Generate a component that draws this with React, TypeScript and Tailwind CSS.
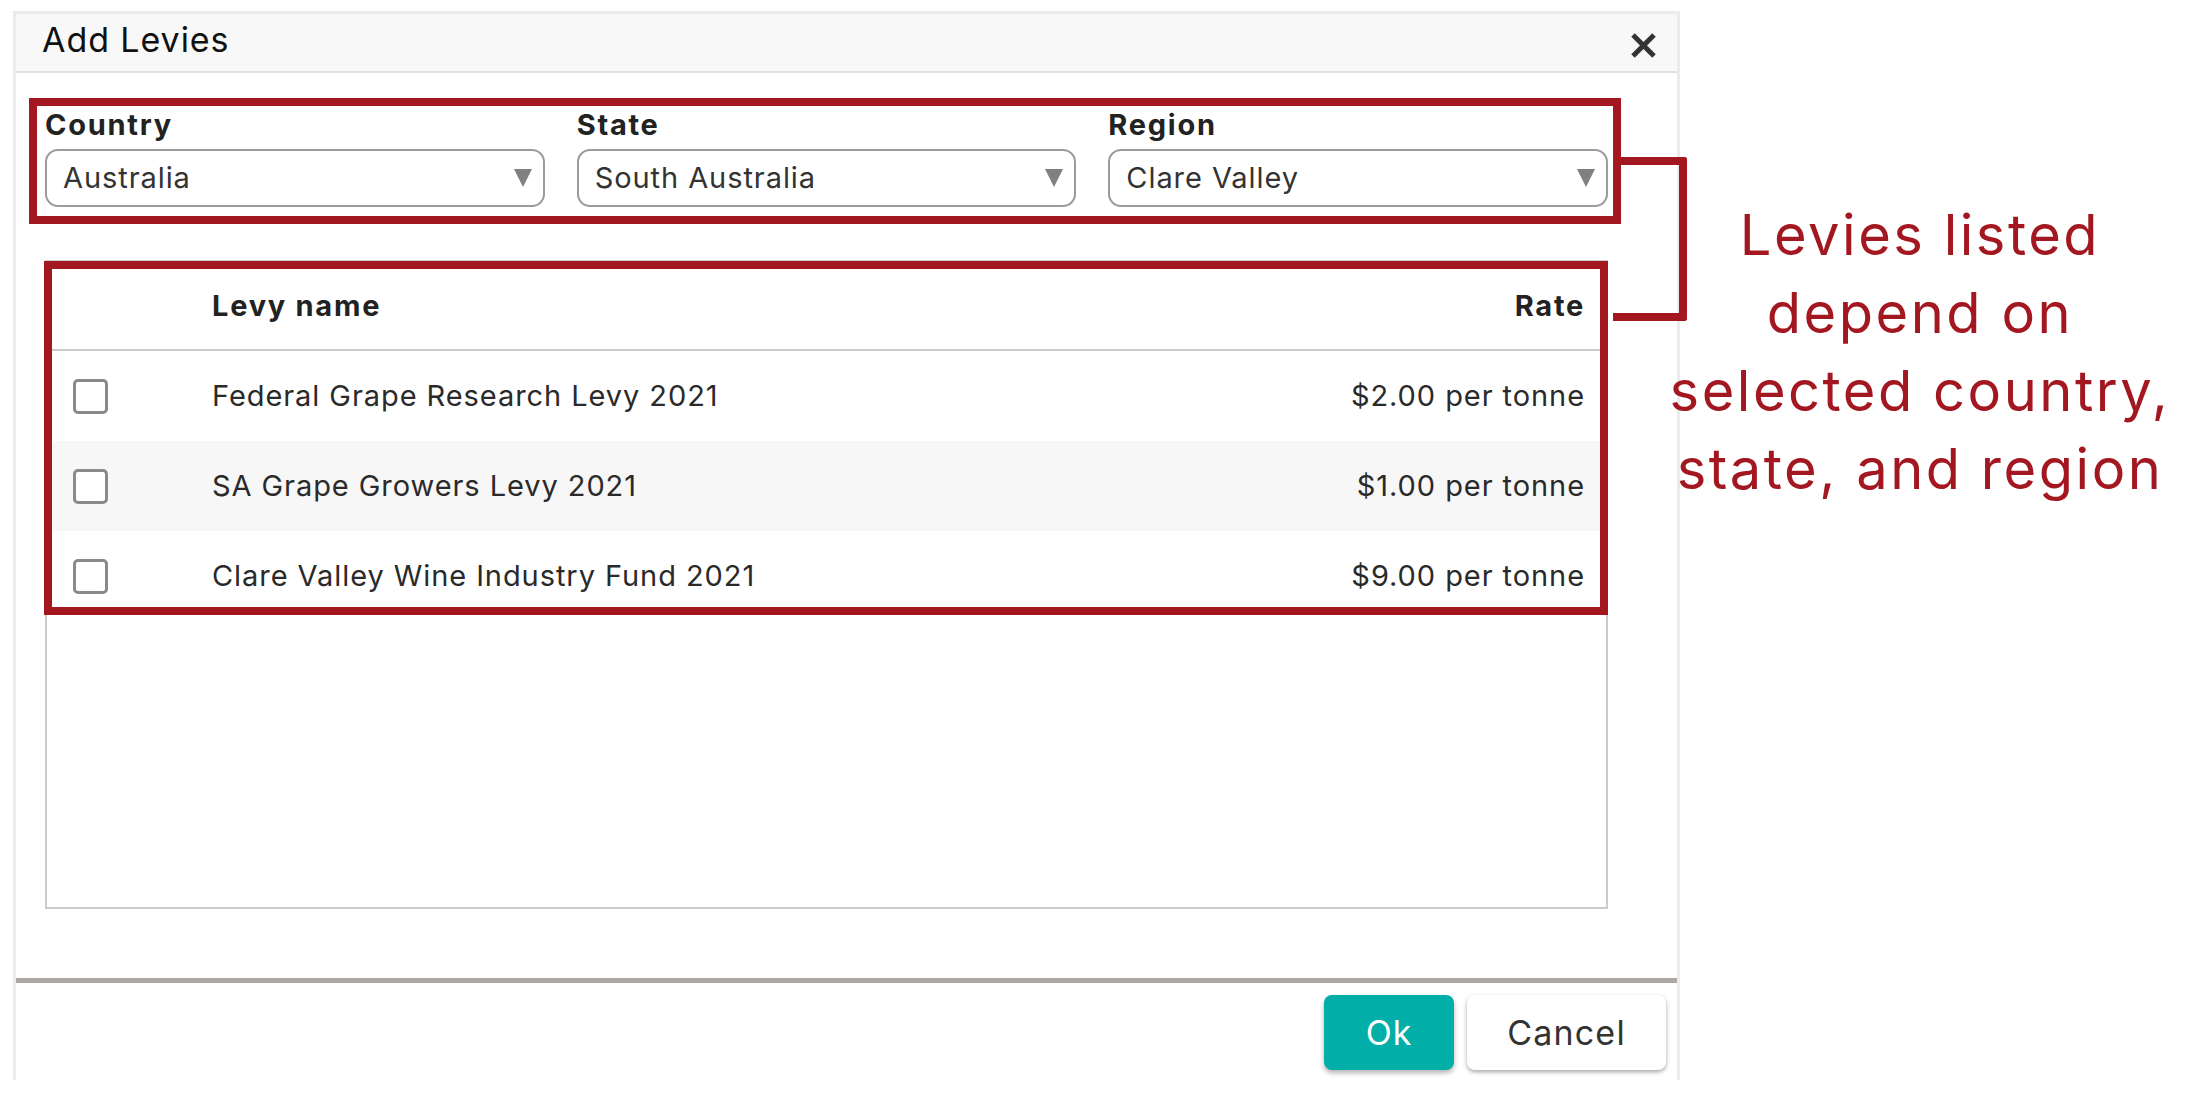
import React from "react";

function Arrow() {
  return (
    <svg width="18" height="18" viewBox="0 0 18 18" className="shrink-0">
      <polygon points="0,0 18,0 9,18" fill="#808080" />
    </svg>
  );
}

function Select({ label, value }: { label: string; value: string }) {
  return (
    <div className="flex flex-col">
      <div className="text-[29px] leading-[34px] font-bold tracking-[0.06em] text-[#222] mb-[7px]">{label}</div>
      <div className="h-[58px] border-2 border-[#9b9b9b] rounded-[13px] flex items-center justify-between pl-[16px] pr-[11px]">
        <span className="text-[29px] text-[#333]">{value}</span>
        <Arrow />
      </div>
    </div>
  );
}

function Checkbox() {
  return <div className="w-[35px] h-[35px] border-[3px] border-[#8a8a8a] rounded-[5px] bg-white" />;
}

const rows = [
  { name: "Federal Grape Research Levy 2021", rate: "$2.00 per tonne" },
  { name: "SA Grape Growers Levy 2021", rate: "$1.00 per tonne" },
  { name: "Clare Valley Wine Industry Fund 2021", rate: "$9.00 per tonne" },
];

export default function App() {
  return (
    <div className="relative w-[2208px] h-[1097px] bg-white overflow-hidden flex tracking-[0.058em] font-['Inter','Noto_Sans',sans-serif]">
      {/* Dialog */}
      <div className="mt-[11px] ml-[13px] w-[1667px] h-[1069px] shrink-0 border-[3px] border-b-0 border-[#ebebeb] flex flex-col">
        <div className="h-[59px] shrink-0 bg-[#f8f8f8] border-b-2 border-[#e0e0e0] flex items-center justify-between pl-[26px] pr-[20px]">
          <span className="text-[34px] text-[#111] pb-[6px]">Add Levies</span>
          <svg width="27" height="27" viewBox="0 0 27 27" className="translate-y-[3px]">
            <line x1="3" y1="3" x2="24" y2="24" stroke="#333" strokeWidth="5" />
            <line x1="24" y1="3" x2="3" y2="24" stroke="#333" strokeWidth="5" />
          </svg>
        </div>

        <div className="pl-[29px] pr-[69px] pt-[35px]">
          <div className="grid grid-cols-3 gap-x-[32px]">
            <Select label="Country" value="Australia" />
            <Select label="State" value="South Australia" />
            <Select label="Region" value="Clare Valley" />
          </div>

          <div className="mt-[53px] h-[649px] border-2 border-[#cccccc]">
            <div className="h-[89px] border-b-2 border-[#cccccc] flex items-center">
              <div className="w-[165px] shrink-0" />
              <div className="flex-1 text-[29px] font-bold tracking-[0.06em] text-[#222]">Levy name</div>
              <div className="pr-[21px] text-[29px] font-bold tracking-[0.06em] text-[#222]">Rate</div>
            </div>
            {rows.map((r, i) => (
              <div key={r.name} className={`h-[90px] flex items-center ${i === 1 ? "bg-[#f7f7f7]" : "bg-white"}`}>
                <div className="w-[165px] shrink-0 pl-[26px]">
                  <Checkbox />
                </div>
                <div className="flex-1 text-[29px] text-[#2a2a2a]">{r.name}</div>
                <div className="pr-[21px] text-[29px] text-[#2a2a2a]">{r.rate}</div>
              </div>
            ))}
          </div>
        </div>

        <div className="mt-[69px] h-[5px] shrink-0 bg-[#aba7a3]" />
        <div className="flex justify-end gap-[13px] pt-[12px] pr-[11px]">
          <button className="w-[130px] h-[75px] rounded-[8px] bg-[#02aea8] text-white text-[34px] shadow-[0_3px_5px_rgba(0,0,0,0.3)]">
            Ok
          </button>
          <button className="w-[199px] h-[75px] rounded-[8px] bg-white text-[#333] text-[34px] tracking-[0.035em] shadow-[0_2px_4px_rgba(0,0,0,0.35)]">
            Cancel
          </button>
        </div>
      </div>

      {/* Annotation text */}
      <div className="flex-1 min-w-0 flex flex-col items-center pt-[196px] pr-[48px]">
        {["Levies listed", "depend on", "selected country,", "state, and region"].map((t) => (
          <div key={t} className="whitespace-nowrap text-[56px] leading-[78px] tracking-[0.045em] text-[#a31720]">
            {t}
          </div>
        ))}
      </div>

      {/* Red highlight overlays */}
      <div className="absolute left-[29px] top-[98px] w-[1592px] h-[126px] border-[8px] border-[#a31720] pointer-events-none" />
      <div className="absolute left-[44px] top-[261px] w-[1564px] h-[354px] border-[8px] border-[#a31720] pointer-events-none" />
      <div className="absolute left-[1613px] top-[157px] w-[74px] h-[164px] border-t-[8px] border-r-[8px] border-b-[8px] border-[#a31720] rounded-r-[3px] pointer-events-none" />
    </div>
  );
}
